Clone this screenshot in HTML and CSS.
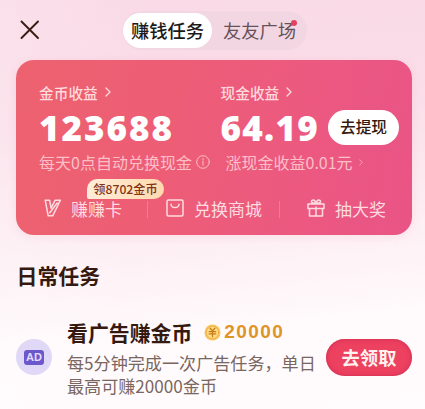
FILE: index.html
```html
<!DOCTYPE html>
<html lang="zh-CN">
<head>
<meta charset="utf-8">
<title>赚钱任务</title>
<link rel="stylesheet" href="styles.css">
</head>
<body>
<header class="topbar">
  <svg class="close" viewBox="0 0 20 20"><path d="M1.5 1.5 18 18M18 1.5 1.5 18"/></svg>
  <nav class="tabs">
    <span class="tab active">赚钱任务</span>
    <span class="tab">友友广场<i class="dot"></i></span>
  </nav>
</header>

<section class="card">
  <div class="earnings">
    <div class="earning">
      <div class="label">金币收益<svg class="chev" viewBox="0 0 6 10"><path d="M1 1l4 4-4 4"/></svg></div>
      <div class="amount">123688</div>
      <div class="sub">每天0点自动兑换现金<svg class="info" viewBox="0 0 14 14"><circle cx="7" cy="7" r="6.3"/><path d="M7 6v4.2M7 3.6v1.2"/></svg></div>
    </div>
    <div class="earning">
      <div class="label">现金收益<svg class="chev" viewBox="0 0 6 10"><path d="M1 1l4 4-4 4"/></svg></div>
      <div class="amount money">64.19<span class="withdraw">去提现</span></div>
      <div class="sub cash">涨现金收益0.01元<svg class="chev small" viewBox="0 0 6 10"><path d="M1 1l4 4-4 4"/></svg></div>
    </div>
  </div>
  <div class="links">
    <div class="link first">
      <svg class="icon" viewBox="0 0 18 18"><path d="M1.2 1.2h4.4l1.5 8 4.1-8h5.2L8.7 16.8H4.2zM5.8 13.8 13.2 4"/></svg>
      <span>赚赚卡</span>
      <b class="badge">领8702金币</b>
    </div>
    <div class="link">
      <svg class="icon" viewBox="0 0 18 18"><rect x="1" y="1" width="16" height="16" rx="1.5"/><path d="M5 5.2c.4 4.5 7.600 4.500 8 0"/></svg>
      <span>兑换商城</span>
    </div>
    <div class="link last">
      <svg class="icon" viewBox="0 0 18 18"><path d="M1 5h16v4.500H1zM2.500 9.500V17h13V9.500M9 8v9M8.700 4.500C3 4.500 4 1 6.200 1S8.700 4.500 8.700 4.500M9.300 4.500C15 4.500 14 1 11.800 1S9.300 4.500 9.300 4.500"/></svg>
      <span>抽大奖</span>
    </div>
  </div>
</section>

<h2 class="heading">日常任务</h2>

<section class="task">
  <div class="avatar"><span class="ad">AD</span></div>
  <div class="body">
    <div class="title">看广告赚金币
      <svg class="coin" viewBox="0 0 18 18"><circle class="rim" cx="9" cy="9" r="8.500"/><circle class="face" cx="9" cy="9" r="6.600"/><path d="M6.500 4.500 9 7.300l2.500-2.800M5.500 8h7M5.500 10.500h7M9 7.500v6"/></svg>
      <span class="reward">20000</span>
    </div>
    <p class="desc">每5分钟完成一次广告任务，单日<br>最高可赚20000金币</p>
  </div>
  <span class="claim">去领取</span>
</section>
</body>
</html>
```

FILE: styles.css
```css
* { box-sizing: border-box; }

body {
  margin: 0;
  width: 425px;
  height: 409px;
  overflow: hidden;
  font-family: "Noto Sans CJK SC", sans-serif;
  white-space: nowrap;
  color: #35190f;
  background:
    linear-gradient(to right, rgba(255, 255, 255, .2), transparent 35%),
    linear-gradient(174deg, #f9d9e6 0, #fadde8 28%, #fdeef3 56%, #fffafc 78%, #fffcfe 100%);
}

svg { display: block; flex: none; fill: none; stroke: currentColor; stroke-linecap: round; stroke-linejoin: round; }

.topbar { display: flex; align-items: center; height: 60px; padding-left: 20px; }
.close { width: 20px; height: 20px; stroke-width: 1.9; color: #3b1c14; }
.tabs {
  display: flex;
  margin-left: 82px;
  width: 185px;
  height: 39px;
  padding: 2px 0 2px 1px;
  border-radius: 20px;
  background: #f2d7e2;
}
.tab { position: relative; height: 35px; line-height: 34px; padding: 0 11px; font-size: 18.3px; color: #66505a; }
.tab.active { width: 89px; padding: 0 8px; border-radius: 18px; background: #fff; color: #1b1919; font-weight: 500; }
.dot { position: absolute; top: 7px; right: 10px; width: 6px; height: 6px; border-radius: 50%; background: #e5405f; }

.card {
  margin-left: 16px;
  width: 396px;
  height: 175px;
  padding-top: 21px;
  border-radius: 18px;
  color: #fff;
  background: linear-gradient(100deg, #ed626f 0, #ed5d76 40%, #ec5980 70%, #e95486 100%);
  box-shadow: 0 2px 10px rgba(235, 110, 145, .12);
}
.earnings { display: grid; grid-template-columns: 181.500px 1fr; padding-left: 23px; }
.label { display: flex; align-items: center; height: 22px; font-size: 14.700px; font-weight: 500; color: #ffdadd; }
.chev { width: 6px; height: 10px; margin-left: 7px; stroke-width: 1.300; }
.chev.small { width: 4px; height: 7px; margin-left: 6px; opacity: .8; }
.amount {
  display: flex;
  align-items: center;
  height: 48px;
  font: 800 35px "Open Sans", "Noto Sans", sans-serif;
  letter-spacing: 2px;
}
.amount.money { letter-spacing: 1.300px; }
.withdraw {
  width: 71px;
  height: 35px;
  margin-left: auto;
  margin-right: 13px;
  border-radius: 18px;
  background: #fff;
  color: #35190f;
  font: 500 15.700px/34px "Noto Sans CJK SC", sans-serif;
  letter-spacing: 0;
  text-align: center;
}
.sub { display: flex; align-items: center; height: 22px; font-size: 16px; color: #fcbfc8; }
.sub.cash { padding-left: 5px; }
.info { width: 14px; height: 14px; margin-left: 4px; stroke-width: 1; }

.links { display: flex; margin-top: 22px; height: 26px; font-size: 17px; color: #ffdbe0; }
.link { position: relative; display: flex; align-items: center; gap: 10px; width: 133px; padding-left: 18px; }
.link.first { padding-left: 28px; gap: 9px; }
.link.last { padding-left: 27px; }
.link + .link::before { content: ""; position: absolute; left: -1px; top: 6px; width: 1px; height: 17px; background: rgba(255, 200, 210, .3); }
.icon { width: 18px; height: 18px; stroke-width: 1.500; }
.badge {
  position: absolute;
  left: 71px;
  top: -16px;
  width: 77px;
  height: 20px;
  border-radius: 10px 10px 10px 2px;
  background: linear-gradient(to right, #ffedd8, #ffd9ae);
  color: #823516;
  font-size: 12.200px;
  font-weight: 500;
  line-height: 20px;
  text-align: center;
}

.heading { margin: 24px 0 0 16.500px; font-size: 20.900px; line-height: 32px; font-weight: 700; }

.task { display: flex; align-items: center; margin: 26px 0 0 16px; height: 80px; }
.avatar { display: grid; place-items: center; flex: none; width: 36px; height: 36px; border-radius: 50%; background: #dfd8f6; }
.ad { width: 20px; height: 15px; border-radius: 3px; background: #6d58cb; color: #e4dcff; font: 700 11px/15px "Liberation Sans", sans-serif; text-align: center; }
.body { width: 259px; margin-left: 15px; }
.title { display: flex; align-items: center; height: 29px; font-size: 20.900px; font-weight: 700; }
.coin { width: 17px; height: 17px; margin-left: 12px; color: #c87912; stroke-width: 1.300; }
.rim { fill: #f7c45f; stroke: none; }
.face { fill: #ffdc87; stroke: #eea838; stroke-width: .8; }
.reward { margin-left: 3px; font: 700 19px "Liberation Sans", sans-serif; letter-spacing: 1.400px; color: #df9426; }
.desc { margin: 4px 0 0; font-size: 17.100px; line-height: 23px; color: #796660; }
.claim {
  width: 86px;
  height: 37px;
  border-radius: 19px;
  background: #ed4160;
  box-shadow: inset 0 0 5px #cd2c4f;
  color: #fff2ee;
  font-size: 18.300px;
  font-weight: 700;
  line-height: 36px;
  text-align: center;
}
```
